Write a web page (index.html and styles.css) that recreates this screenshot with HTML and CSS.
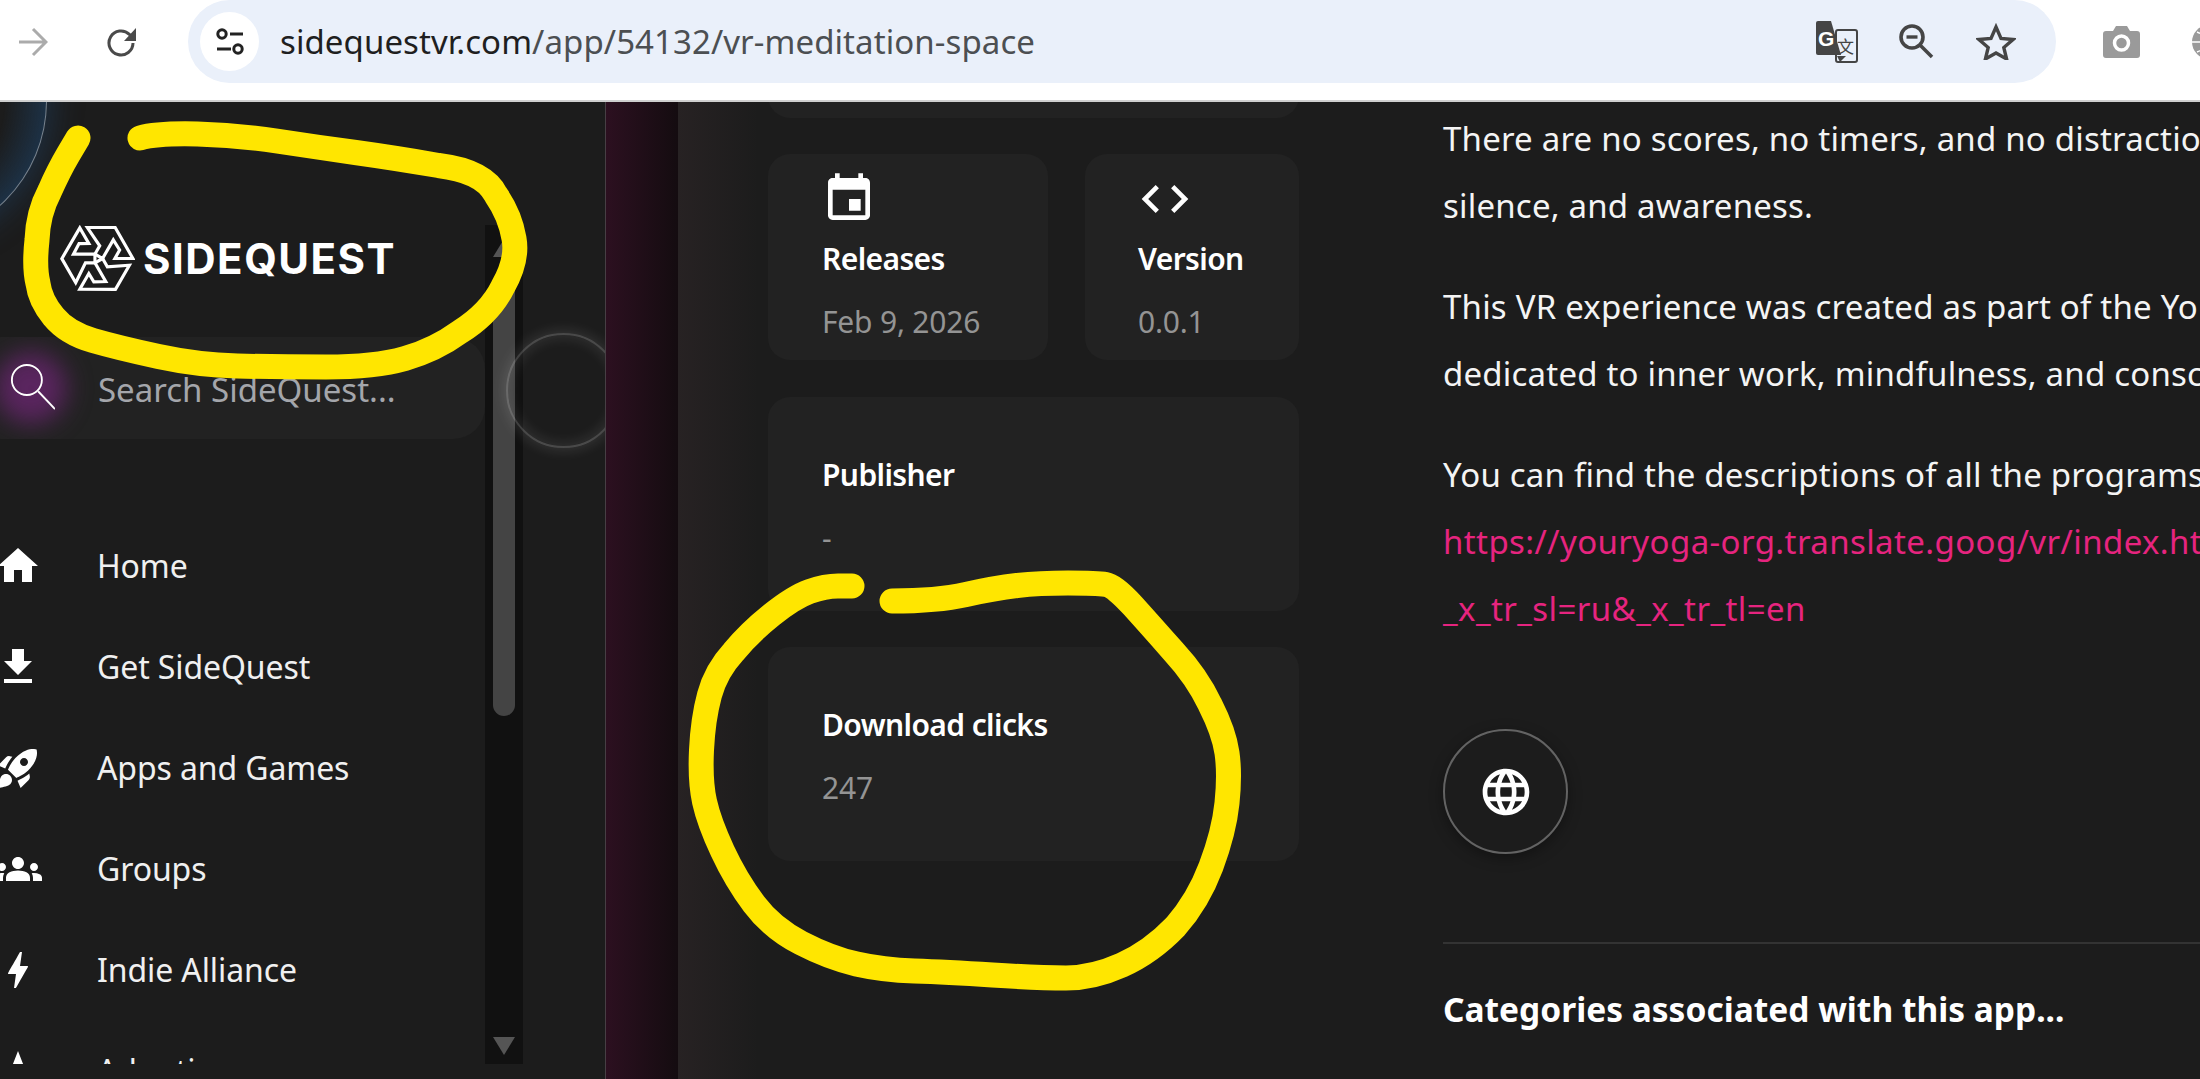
FILE: index.html
```html
<!DOCTYPE html>
<html lang="en">
<head>
<meta charset="utf-8">
<title>VR Meditation Space - SideQuest</title>
<link rel="stylesheet" href="styles.css">
</head>
<body>
<header class="toolbar">
  <svg class="tb-arrow" viewBox="0 0 30 30"><path d="M1 15h27M15 2l13 13-13 13" fill="none" stroke="#ababab" stroke-width="3"/></svg>
  <svg class="tb-reload" viewBox="0 0 32 32"><path d="M27 17a12 12 0 1 1-3.6-8.6L29 13" fill="none" stroke="#4a4a4a" stroke-width="3"/><path d="M30 2v13H18z" fill="#4a4a4a"/></svg>
  <div class="pill">
    <div class="tune">
      <svg viewBox="0 0 32 32" class="tune-icon"><circle cx="8" cy="8" r="4.2" fill="none" stroke="#222" stroke-width="3"/><path d="M16 8h13M3 23h14" stroke="#222" stroke-width="3"/><circle cx="24" cy="23" r="4.2" fill="none" stroke="#222" stroke-width="3"/></svg>
    </div>
    <div class="url"><span class="host">sidequestvr.com</span>/app/54132/vr-meditation-space</div>
    <div class="pill-icons">
      <svg class="ic-translate" viewBox="0 0 42 42">
        <rect x="20" y="9" width="21" height="32" rx="2" fill="#eaf0fa" stroke="#454545" stroke-width="2"/>
        <path d="M2 0h13l10 34H2a2 2 0 0 1-2-2V2a2 2 0 0 1 2-2z" fill="#454545"/>
        <path d="M21 35l3 6 6-6z" fill="#454545"/>
        <text x="2" y="25" class="ic-g">G</text>
        <text x="21" y="32" class="ic-wen">文</text>
      </svg>
      <svg class="ic-zoom" viewBox="0 0 35 35"><circle cx="13" cy="13" r="11" fill="none" stroke="#454545" stroke-width="3.6"/><path d="M7.5 13h11" stroke="#454545" stroke-width="3.4"/><path d="M21 21l12 12" stroke="#454545" stroke-width="3.6"/></svg>
      <svg class="ic-star" viewBox="0 0 40 37"><path d="M20 4l5 11.5 12 1-9.200 8 2.800 11.500L20 30l-10.600 6 2.800-11.500L3 16.500l12-1z" fill="none" stroke="#454545" stroke-width="3.400"/></svg>
    </div>
  </div>
  <svg class="tb-camera" viewBox="0 0 37 32"><path d="M3 5h7l3-5h11l3 5h7a3 3 0 0 1 3 3v21a3 3 0 0 1-3 3H3a3 3 0 0 1-3-3V8a3 3 0 0 1 3-3z" fill="#9a9a9a"/><circle cx="18.500" cy="17" r="7" fill="none" stroke="#fff" stroke-width="3.500"/></svg>
  <svg class="tb-globe" viewBox="0 0 36 36"><circle cx="18" cy="18" r="17" fill="#9a9a9a"/><path d="M1 18h34M18 1v34M6 8c8 4 16 4 24 0M6 28c8-4 16-4 24 0" fill="none" stroke="#fff" stroke-width="1.500"/></svg>
</header>

<div class="page">
  <aside class="side">
    <div class="ring-blue"></div>
    <div class="side-scroll">
      <div class="brand">
        <svg class="brand-mark" viewBox="-118 -106 236 212" fill="none" stroke="#fff" stroke-width="10" stroke-linejoin="miter">
          <path d="M-32-98H56L112 0H55L70-27 50-59 16 0-8-14 7-40z"/>
          <path transform="rotate(120)" d="M-32-98H56L112 0H55L70-27 50-59 16 0-8-14 7-40z"/>
          <path transform="rotate(240)" d="M-32-98H56L112 0H55L70-27 50-59 16 0-8-14 7-40z"/>
        </svg>
        <span class="brand-name">SIDEQUEST</span>
      </div>
      <div class="search">
        <span class="search-glow"></span>
        <svg class="search-icon" viewBox="0 0 48 50"><circle cx="18" cy="17" r="16" fill="none" stroke="#fff" stroke-width="2"/><path d="M30 29l18 19" stroke="#fff" stroke-width="2"/></svg>
        <span class="search-text">Search SideQuest...</span>
      </div>
      <nav class="nav">
        <a class="nav-row"><svg class="nav-ic" viewBox="0 0 24 24"><path d="M10 20v-6h4v6h5v-8h3L12 3 2 12h3v8z"/></svg>Home</a>
        <a class="nav-row"><svg class="nav-ic" viewBox="0 0 24 24"><path d="M19 9h-4V3H9v6H5l7 7 7-7zM5 18v2h14v-2H5z"/></svg>Get SideQuest</a>
        <a class="nav-row"><svg class="nav-ic" viewBox="0 0 24 24"><path fill-rule="evenodd" d="M9.190 6.350c-2.040 2.290-3.440 5.580-3.570 5.890L2 10.690l4.050-4.050c.47-.47 1.150-.68 1.810-.55l1.330.26zM11.170 17s3.740-1.550 5.890-3.700c5.400-5.400 4.500-9.620 4.210-10.570-.95-.3-5.170-1.190-10.570 4.210C8.550 9.090 7 12.830 7 12.830L11.170 17zm6.480-2.190c-2.290 2.040-5.580 3.440-5.890 3.570L13.310 22l4.050-4.050c.47-.47.68-1.150.55-1.810l-.26-1.330zM9 18c0 .83-.34 1.580-.88 2.120C6.940 21.300 2 22 2 22s.7-4.940 1.880-6.120C4.420 15.340 5.170 15 6 15c1.660 0 3 1.340 3 3zm4-9c0-1.100.9-2 2-2s2 .9 2 2-.9 2-2 2-2-.9-2-2z"/></svg>Apps and Games</a>
        <a class="nav-row"><svg class="nav-ic" viewBox="0 0 24 24"><path d="M12 12.750c1.630 0 3.070.39 4.240.9 1.080.48 1.760 1.560 1.760 2.730V18H6v-1.610c0-1.180.68-2.260 1.760-2.730 1.170-.52 2.610-.91 4.240-.91zM4 13c1.100 0 2-.9 2-2s-.9-2-2-2-2 .9-2 2 .9 2 2 2zm1.130 1.100C4.760 14.040 4.390 14 4 14c-.99 0-1.930.21-2.780.58C.48 14.900 0 15.620 0 16.430V18h4.500v-1.610c0-.83.23-1.610.63-2.290zM20 13c1.100 0 2-.9 2-2s-.9-2-2-2-2 .9-2 2 .9 2 2 2zm4 3.430c0-.81-.48-1.530-1.220-1.850-.85-.37-1.790-.58-2.780-.58-.39 0-.76.04-1.130.1.4.68.63 1.460.63 2.290V18H24v-1.570zM12 12c1.660 0 3-1.340 3-3s-1.340-3-3-3-3 1.340-3 3 1.340 3 3 3z"/></svg>Groups</a>
        <a class="nav-row"><svg class="nav-ic" viewBox="0 0 24 24"><path d="M11 21h-1l1-7H7.500c-.58 0-.57-.32-.38-.66.19-.34.05-.08.07-.12C8.480 10.940 10.420 7.540 13 3h1l-1 7h3.500c.49 0 .56.33.47.51l-.07.15C12.960 17.550 11 21 11 21z"/></svg>Indie Alliance</a>
        <a class="nav-row"><svg class="nav-ic" viewBox="0 0 24 24"><path d="M12 2l2.800 7.200L22 10l-5.500 4.700L18.200 22 12 18l-6.200 4 1.700-7.300L2 10l7.200-.8z"/></svg>Adoption</a>
      </nav>
    </div>
    <div class="scrollbar">
      <span class="sb-up"></span>
      <span class="sb-thumb"></span>
      <span class="sb-down"></span>
    </div>
    <div class="ring-grey"></div>
  </aside>

  <div class="strip"></div>

  <main class="main">
    <section class="info">
      <div class="card card-stub"></div>
      <div class="info-row">
        <div class="card card-release">
          <svg class="card-ic" viewBox="0 0 24 24"><path d="M17 12h-5v5h5v-5zM16 1v2H8V1H6v2H5c-1.110 0-1.990.9-1.990 2L3 19c0 1.100.89 2 2 2h14c1.100 0 2-.9 2-2V5c0-1.100-.9-2-2-2h-1V1h-2zm3 18H5V8h14v11z"/></svg>
          <div class="card-title">Releases</div>
          <div class="card-value">Feb 9, 2026</div>
        </div>
        <div class="card card-version">
          <svg class="card-ic" viewBox="0 0 24 24"><path d="M9.400 16.600L4.800 12l4.600-4.600L8 6l-6 6 6 6 1.400-1.400zm5.200 0l4.600-4.600-4.600-4.600L16 6l6 6-6 6-1.400-1.400z"/></svg>
          <div class="card-title">Version</div>
          <div class="card-value">0.0.1</div>
        </div>
      </div>
      <div class="card card-wide">
        <div class="card-title">Publisher</div>
        <div class="card-value">-</div>
      </div>
      <div class="card card-wide">
        <div class="card-title">Download clicks</div>
        <div class="card-value">247</div>
      </div>
    </section>

    <section class="desc">
      <p class="para">There are no scores, no timers, and no distractions — only breath,<br>silence, and awareness.</p>
      <p class="para">This VR experience was created as part of the YouYoga project,<br>dedicated to inner work, mindfulness, and consciousness.</p>
      <p class="para">You can find the descriptions of all the programs here:<br><a class="link">https://youryoga-org.translate.goog/vr/index.html?</a><br><a class="link">_x_tr_sl=ru&amp;_x_tr_tl=en</a></p>
      <div class="globe-btn">
        <svg viewBox="0 0 24 24" class="globe-ic"><path d="M11.990 2C6.470 2 2 6.480 2 12s4.470 10 9.990 10C17.520 22 22 17.520 22 12S17.520 2 11.990 2zm6.930 6h-2.950c-.32-1.250-.78-2.450-1.380-3.560 1.840.63 3.370 1.910 4.330 3.560zM12 4.040c.83 1.200 1.480 2.530 1.910 3.960h-3.820c.43-1.430 1.080-2.760 1.910-3.960zM4.260 14C4.100 13.360 4 12.690 4 12s.1-1.360.26-2h3.380c-.08.66-.14 1.320-.14 2s.06 1.340.14 2H4.260zm.82 2h2.950c.32 1.250.78 2.450 1.380 3.560-1.840-.63-3.370-1.900-4.330-3.560zm2.950-8H5.080c.96-1.660 2.490-2.930 4.330-3.560C8.810 5.550 8.350 6.750 8.030 8zM12 19.960c-.83-1.200-1.480-2.530-1.910-3.960h3.820c-.43 1.430-1.080 2.760-1.910 3.960zM14.340 14H9.660c-.09-.66-.16-1.320-.16-2s.07-1.350.16-2h4.680c.09.65.16 1.320.16 2s-.07 1.340-.16 2zm.25 5.560c.6-1.110 1.060-2.310 1.380-3.560h2.950c-.96 1.650-2.490 2.930-4.330 3.560zM16.360 14c.08-.66.14-1.320.14-2s-.06-1.340-.14-2h3.380c.16.64.26 1.310.26 2s-.1 1.360-.26 2h-3.380z"/></svg>
      </div>
      <hr class="rule">
      <h2 class="cat-head">Categories associated with this app...</h2>
    </section>
  </main>
</div>

<svg class="scribble" viewBox="0 0 2200 1079" fill="none" stroke="#ffe600" stroke-width="25" stroke-linecap="round" stroke-linejoin="round">
  <path d="M78 138L68.500 154Q59 170 49.500 191.500Q38 213 37 240Q34 267 38 283.500Q40 300 53.500 316.500Q67 333 93 340.500Q119 348 158.500 356.500Q198 365 237.500 366Q277 367 326 367Q375 367 405 358.500Q435 350 460.500 331.500Q490 313 503 286.500Q518 260 514 238.500Q510 215 496 195Q484 171 438.500 165.500Q395 158 355.500 152.500Q316 147 276.500 141Q237 135 197.500 134Q158 133 140 138"/>
  <path d="M852 586L838 586Q825 586 809.500 591.500Q794 597 771.500 615Q749 633 733.500 652Q716 671 709.500 695Q703 719 701.500 750Q700 781 704.500 801.500Q709 822 722.500 851Q736 880 754 904Q772 928 801 943Q830 958 856.500 964Q883 970 914.500 971Q946 972 992.500 975Q1039 978 1066 978Q1093 978 1122 965Q1151 952 1175.500 926.500Q1198 901 1211 866.500Q1224 832 1227 803Q1230 774 1227 753Q1224 732 1210 704.500Q1197 677 1173.500 651.500Q1151 626 1133 606Q1115 586 1106 584.500Q1097 583 1068 583Q1039 583 1017 585.500Q995 588 966 594.500Q937 601 892 601"/>
</svg>
</body>
</html>
```
FILE: styles.css
```css
* { box-sizing: border-box; }
html, body { margin: 0; height: 100%; }
body {
  position: relative;
  width: 2200px;
  height: 1079px;
  overflow: hidden;
  background: #1c1c1c;
  color: #fff;
  font-family: "Noto Sans", "Liberation Sans", sans-serif;
}

/* Browser toolbar */
.toolbar {
  display: flex;
  align-items: flex-start;
  height: 102px;
  background: #fff;
  border-bottom: 2px solid #cfcfcf;
}
.tb-arrow { flex: none; width: 30px; height: 30px; margin: 27px 0 0 18px; }
.tb-reload { flex: none; width: 32px; height: 32px; margin: 26px 0 0 58px; }
.pill {
  flex: none;
  display: flex;
  align-items: center;
  width: 1868px;
  height: 83px;
  margin-left: 50px;
  padding-left: 12px;
  background: #eaf0fa;
  border-radius: 42px;
}
.tune {
  flex: none;
  display: flex;
  align-items: center;
  justify-content: center;
  width: 59px;
  height: 59px;
  background: #fff;
  border-radius: 50%;
}
.tune-icon { width: 32px; height: 32px; }
.url {
  margin-left: 21px;
  font-size: 33px;
  letter-spacing: 0.08px;
  color: #4c4f52;
  white-space: nowrap;
}
.host { color: #1f1f1f; }
.pill-icons {
  display: flex;
  align-items: center;
  margin-left: auto;
  padding-right: 40px;
}
.ic-translate { width: 42px; height: 42px; }
.ic-g { font: 700 21px "Liberation Sans", sans-serif; fill: #fff; }
.ic-wen { font: 400 17px "Noto Sans CJK SC", sans-serif; fill: #454545; }
.ic-zoom { width: 35px; height: 35px; margin-left: 41px; }
.ic-star { width: 40px; height: 37px; margin-left: 42px; }
.tb-camera { flex: none; width: 37px; height: 32px; margin: 26px 0 0 47px; }
.tb-globe { flex: none; width: 36px; height: 36px; margin: 24px 0 0 51px; }

/* Page */
.page {
  display: flex;
  height: 977px;
  overflow: hidden;
}

/* Sidebar */
.side {
  position: relative;
  flex: none;
  display: flex;
  align-items: flex-start;
  width: 606px;
  height: 977px;
  padding-top: 123px;
  overflow: hidden;
  background: #1c1c1c;
  border-right: 1px solid #473f44;
}
.ring-blue {
  position: absolute;
  left: -235px;
  top: -142px;
  width: 282px;
  height: 282px;
  border-radius: 50%;
  border: 1px solid rgba(255, 255, 255, 0.4);
  background: radial-gradient(circle closest-side, rgba(30, 70, 110, 0) 70%, rgba(30, 70, 110, 0.5) 100%);
  box-shadow: 0 0 30px 6px rgba(35, 80, 125, 0.38);
}
.ring-grey {
  position: absolute;
  left: 506px;
  top: 231px;
  width: 115px;
  height: 115px;
  border-radius: 50%;
  border: 2px solid rgba(255, 255, 255, 0.2);
  box-shadow: 0 0 14px 2px rgba(255, 255, 255, 0.12), inset 0 0 14px 2px rgba(255, 255, 255, 0.1);
}
.side-scroll {
  position: relative;
  flex: none;
  width: 485px;
  height: 839px;
  overflow: hidden;
}
.brand {
  display: flex;
  align-items: center;
  gap: 8px;
  height: 67px;
  padding-left: 60px;
}
.brand-mark { flex: none; width: 75px; height: 67px; }
.brand-name {
  font-family: Inter, "Liberation Sans", sans-serif;
  font-weight: 700;
  font-size: 42px;
  letter-spacing: 1.5px;
  color: #fff;
}
.search {
  position: relative;
  display: flex;
  align-items: center;
  height: 102px;
  margin: 45px 0 0 -40px;
  padding: 2px 0 0 138px;
  background: #222;
  border-radius: 32px;
  overflow: hidden;
}
.search-glow {
  position: absolute;
  left: 35px;
  top: 15px;
  width: 72px;
  height: 72px;
  border-radius: 50%;
  background: rgba(104, 38, 110, 0.8);
  filter: blur(12px);
}
.search-icon {
  position: absolute;
  left: 50px;
  top: 27px;
  width: 45px;
  height: 47px;
}
.search-text { position: relative; font-size: 33px; color: #a4a6ab; }
.nav { margin-top: 76px; }
.nav-row {
  display: flex;
  align-items: center;
  height: 101px;
  margin-left: -6px;
  font-size: 32px;
  letter-spacing: -0.1px;
  color: #f0f0f0;
}
.nav-ic { flex: none; width: 48px; height: 48px; margin-right: 55px; fill: #fff; }
.scrollbar {
  position: relative;
  flex: none;
  width: 38px;
  height: 839px;
  background: #111;
}
.sb-up, .sb-down {
  position: absolute;
  left: 8px;
  width: 0;
  height: 0;
  border-left: 11px solid transparent;
  border-right: 11px solid transparent;
}
.sb-up { top: 14px; border-bottom: 18px solid #555; }
.sb-down { bottom: 9px; border-top: 18px solid #555; }
.sb-thumb {
  position: absolute;
  left: 8px;
  top: 65px;
  width: 22px;
  height: 426px;
  border-radius: 0 0 11px 11px;
  background: #444;
}

.strip {
  flex: none;
  width: 72px;
  background: linear-gradient(90deg, #2c1020, #140c10);
}

/* Main */
.main {
  flex: 1;
  display: flex;
  gap: 144px;
  min-width: 0;
  padding-left: 90px;
  overflow: hidden;
  background: linear-gradient(90deg, #272223, #1c1c1c 80px);
}
.info {
  flex: none;
  display: flex;
  flex-direction: column;
  gap: 36.500px;
  width: 531px;
}
.info-row { display: flex; gap: 37px; }
.card { background: #222; border-radius: 22px; }
.card-stub { height: 35.500px; margin-top: -20px; border-radius: 0 0 22px 22px; }
.card-release, .card-version { height: 206px; padding-top: 17px; }
.card-release { width: 280px; padding-left: 54px; }
.card-version { width: 214px; padding-left: 53px; }
.card-wide { height: 214px; padding: 58px 0 0 54px; }
.card-ic { display: block; width: 56px; height: 56px; margin-left: -1px; fill: #fff; }
.card-title {
  height: 40px;
  font-size: 30px;
  line-height: 40px;
  font-weight: 600;
  letter-spacing: -0.6px;
}
.card-value {
  height: 40px;
  margin-top: 23px;
  font-size: 30px;
  line-height: 40px;
  letter-spacing: -0.2px;
  color: #949494;
}
.card-release .card-title, .card-version .card-title { margin-top: 12px; }

.desc { flex: none; width: 1200px; padding-top: 3px; }
.para {
  margin: 0 0 34px;
  font-size: 33px;
  line-height: 67px;
  letter-spacing: 0.2px;
  white-space: nowrap;
  color: #f4f4f4;
}
.link { color: #e6247f; letter-spacing: 0.4px; }
.globe-btn {
  display: flex;
  align-items: center;
  justify-content: center;
  width: 125px;
  height: 125px;
  margin-top: 87px;
  border: 2px solid #636363;
  border-radius: 50%;
  box-shadow: 0 4px 14px rgba(0, 0, 0, 0.35);
}
.globe-ic { width: 56px; height: 56px; fill: #fff; }
.rule { height: 2px; margin: 88px 0 0; border: 0; background: #333; }
.cat-head {
  margin: 43px 0 0;
  font-size: 33.500px;
  line-height: 44px;
  font-weight: 700;
  white-space: nowrap;
}

/* Marker annotation drawn over the screenshot */
.scribble {
  position: absolute;
  left: 0;
  top: 0;
  width: 2200px;
  height: 1079px;
  pointer-events: none;
}
```
